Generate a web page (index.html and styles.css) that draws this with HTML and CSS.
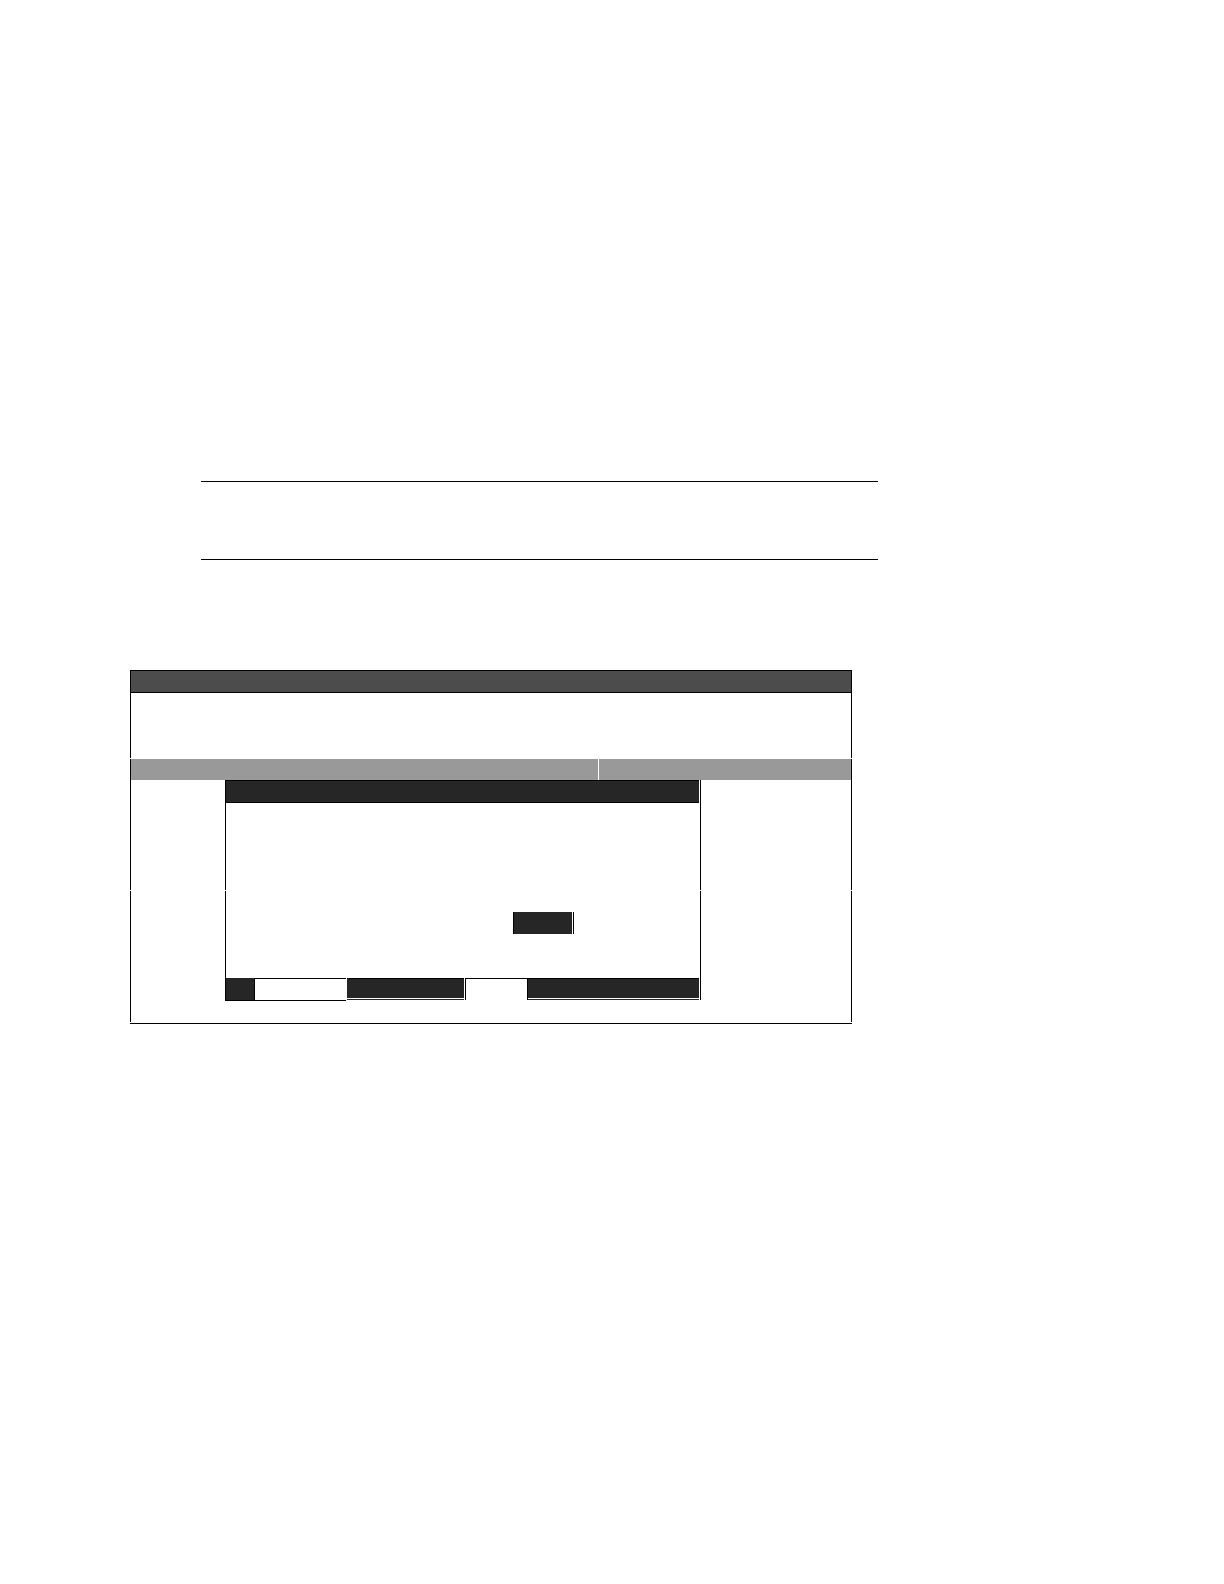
FILE: index.html
```html
<!DOCTYPE html>
<html lang="en">
<head>
<meta charset="utf-8">
<meta name="viewport" content="width=device-width, initial-scale=1">
<title>Panel layout</title>
<link rel="stylesheet" href="styles.css">
</head>
<body>
<main class="sheet">
  <section class="banner"></section>
  <section class="panel">
    <div class="panel-title"></div>
    <div class="panel-intro"></div>
    <div class="columns"><div class="column-head"></div><div class="column-head"></div></div>
    <div class="panel-body">
      <div class="dialog dialog-top"><div class="dialog-title"></div></div>
    </div>
    <div class="panel-body panel-body-lower">
      <div class="dialog dialog-main"><div class="field"></div></div>
      <div class="dialog-footer">
        <div class="cell cell-first"></div>
        <div class="cell cell-open"></div>
        <div class="cell cell-dark"></div>
        <div class="cell cell-slot"></div>
        <div class="cell cell-dark cell-wide"></div>
        <div class="cell cell-edge"></div>
      </div>
    </div>
    <div class="panel-end"></div>
  </section>
</main>
</body>
</html>
```
FILE: styles.css
```css
* { box-sizing: border-box; }

body {
  margin: 0;
  background: #fff;
  font-family: "Liberation Sans", Arial, sans-serif;
}

.sheet { padding: 481px 346px 560px 130px; }

/* pair of rules above the panel */
.banner {
  height: 79px;
  margin-left: 71px;
  border-top: 1px solid #000;
  border-bottom: 1px solid #000;
}

.panel { margin: 110px 26px 0 0; }

.panel-title {
  height: 23px;
  background: #4c4c4c;
  border: 1px solid #000;
}

.panel-intro,
.columns,
.panel-body {
  border-left: 1px solid #000;
  border-right: 1px solid #000;
}

.panel-intro { height: 65px; }

.columns {
  display: grid;
  grid-template-columns: 467fr 252fr;
  gap: 1px;
  margin-top: 1px;
}

.column-head {
  height: 21px;
  background: #999;
}

.panel-body { padding: 0 150px 0 94px; }

.panel-body-lower {
  margin-top: 1px;
  padding-bottom: 21px;
}

.panel-end {
  margin-top: 1px;
  border-top: 1px solid #000;
}

.dialog {
  border-left: 1px solid #000;
  border-right: 1px solid #000;
}

.dialog-top { height: 110px; }

.dialog-title {
  height: 23px;
  margin-right: 1px;
  background: #262626;
  border-top: 1px solid #000;
  border-bottom: 1px solid #000;
}

.dialog-main {
  display: flex;
  justify-content: flex-end;
  height: 87px;
  padding: 21px 126px 0 0;
}

/* filled box with a detached right-hand line */
.field {
  width: 61px;
  height: 22px;
  padding-right: 1px;
  background: #262626 content-box;
  border-left: 1px solid #000;
  border-right: 1px solid #000;
}

.dialog-footer {
  display: grid;
  grid-template-columns: 30px 92fr 118fr 62fr 173fr 1px;
  height: 23px;
}

.cell { border-top: 1px solid #000; }

.cell-first {
  background: #262626;
  border: 1px solid #000;
  border-top-color: #262626;
}

.cell-open {
  margin-right: 1px;
  border-bottom: 1px solid #000;
}

.cell-dark {
  height: 22px;
  margin-right: 1px;
  padding-bottom: 1px;
  background: #262626 content-box;
  border-bottom: 1px solid #262626;
}

.cell-slot {
  height: 22px;
  border-left: 1px solid #000;
}

.cell-wide { border-left: 1px solid #000; }

.cell-edge {
  height: 22px;
  background: #000;
}
```
